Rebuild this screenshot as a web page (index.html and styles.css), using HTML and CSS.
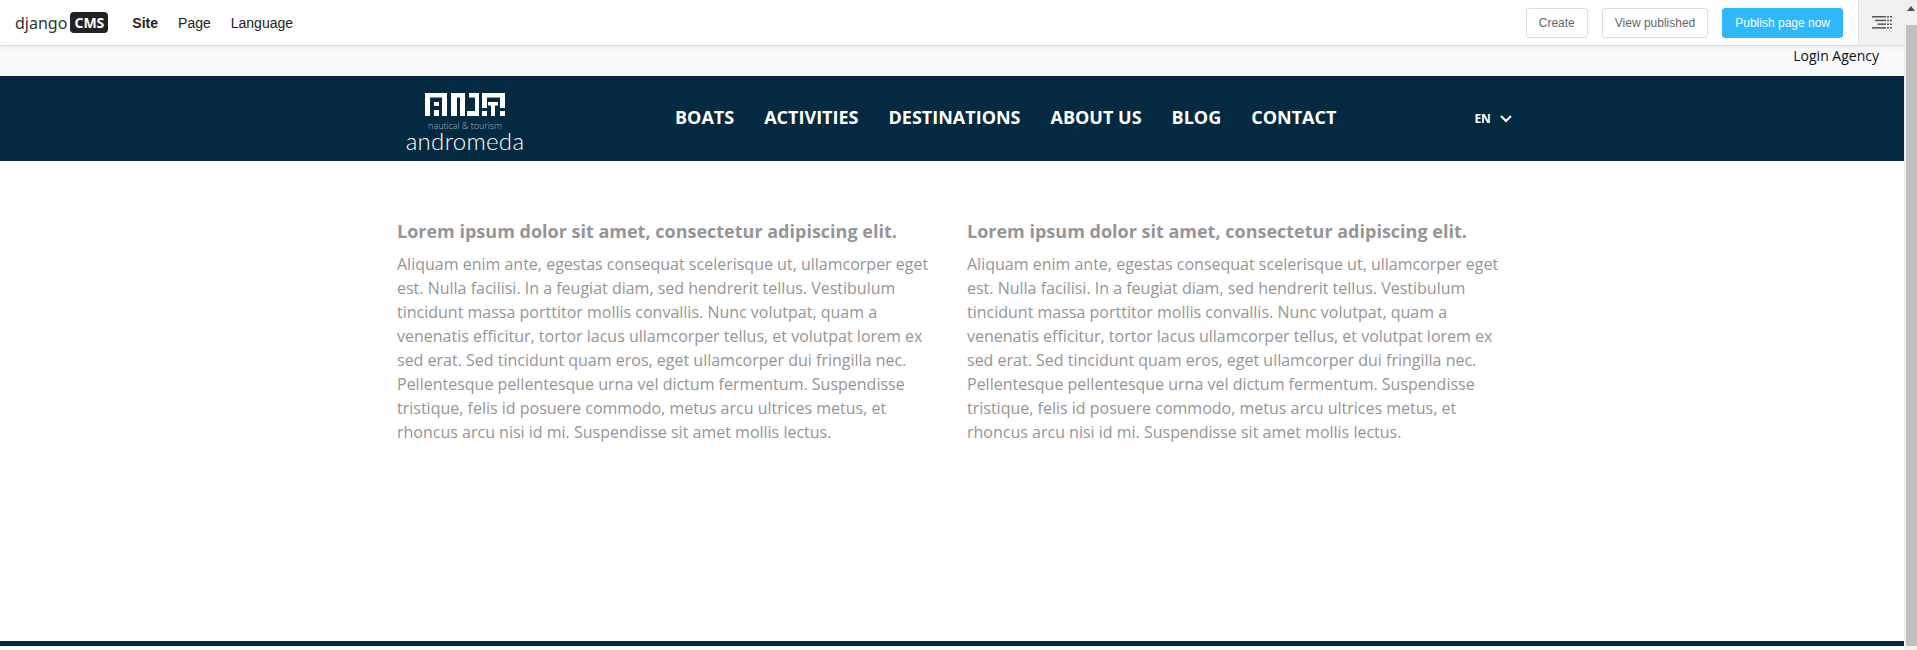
FILE: index.html
```html
<!DOCTYPE html>
<html lang="en">

<head>
  <meta charset="UTF-8" />
  <meta name="viewport" content="width=device-width, initial-scale=1.0" />
  <title>Andromeda - Nautical &amp; Tourism</title>
  <link rel="stylesheet" href="styles.css">
</head>

<body>
  <div class="page">
    <div class="cms-toolbar">
      <div class="cms-logo">django <span class="cms-badge">CMS</span></div>
      <nav class="cms-menu">
        <a href="#" class="active">Site</a>
        <a href="#">Page</a>
        <a href="#">Language</a>
      </nav>
      <div class="cms-actions">
        <a href="#" class="cms-btn">Create</a>
        <a href="#" class="cms-btn">View published</a>
        <a href="#" class="cms-btn primary">Publish page now</a>
      </div>
      <div class="cms-toggle">
        <svg width="20" height="13" viewBox="0 0 20 13" fill="#555">
          <rect x="0" y="0" width="14" height="1.5" />
          <rect x="3" y="3.7" width="11" height="1.5" />
          <rect x="5.5" y="7.4" width="8.5" height="1.5" />
          <rect x="0" y="11.1" width="14" height="1.5" />
          <path d="M15 0h2v1.5h-2zM18 0h2v1.5h-2zM15 3.7h2v1.5h-2zM18 3.7h2v1.5h-2zM15 7.4h2v1.5h-2zM18 7.4h2v1.5h-2zM15 11.1h2v1.5h-2zM18 11.1h2v1.5h-2z" />
        </svg>
      </div>
    </div>

    <div class="login-bar"><a href="#">Login Agency</a></div>

    <header class="site-header">
      <div class="container header-inner">
        <a href="#" class="logo">
          <svg width="80" height="23" viewBox="0 0 80 23" fill="#fff">
            <path d="M0 0h22v23h-5V4.500H5V23H0z" />
            <path d="M9 9h5v4H9zM9 17h5v6H9z" />
            <path d="M26 0h14v23h-5V4.500h-3V23h-6z" />
            <path d="M44 0h10v23H42v-5h8V4.500h-6z" />
            <path d="M57 0h23v15h-5V4.500H62V15h-5zM57 18h5v5h-5zM75 18h5v5h-5z" />
            <path d="M63 9h10v3.500h-3V23h-4V12.500h-3z" />
          </svg>
          <span class="logo-tag">nautical &amp; tourism</span>
          <span class="logo-name">andromeda</span>
        </a>
        <nav class="main-nav">
          <a href="#">BOATS</a>
          <a href="#">ACTIVITIES</a>
          <a href="#">DESTINATIONS</a>
          <a href="#">ABOUT US</a>
          <a href="#">BLOG</a>
          <a href="#">CONTACT</a>
        </nav>
        <div class="lang">EN
          <svg width="12" height="8" viewBox="0 0 12 8" fill="none" stroke="#fff" stroke-width="2">
            <path d="M1 1l5 5 5-5" />
          </svg>
        </div>
      </div>
    </header>

    <main class="container content">
      <section class="col">
        <h3>Lorem ipsum dolor sit amet, consectetur adipiscing elit.</h3>
        <p>Aliquam enim ante, egestas consequat scelerisque ut, ullamcorper eget est. Nulla facilisi. In a feugiat diam, sed hendrerit tellus. Vestibulum tincidunt massa porttitor mollis convallis. Nunc volutpat, quam a venenatis efficitur, tortor lacus ullamcorper tellus, et volutpat lorem ex sed erat. Sed tincidunt quam eros, eget ullamcorper dui fringilla nec. Pellentesque pellentesque urna vel dictum fermentum. Suspendisse tristique, felis id posuere commodo, metus arcu ultrices metus, et rhoncus arcu nisi id mi. Suspendisse sit amet mollis lectus.</p>
      </section>
      <section class="col">
        <h3>Lorem ipsum dolor sit amet, consectetur adipiscing elit.</h3>
        <p>Aliquam enim ante, egestas consequat scelerisque ut, ullamcorper eget est. Nulla facilisi. In a feugiat diam, sed hendrerit tellus. Vestibulum tincidunt massa porttitor mollis convallis. Nunc volutpat, quam a venenatis efficitur, tortor lacus ullamcorper tellus, et volutpat lorem ex sed erat. Sed tincidunt quam eros, eget ullamcorper dui fringilla nec. Pellentesque pellentesque urna vel dictum fermentum. Suspendisse tristique, felis id posuere commodo, metus arcu ultrices metus, et rhoncus arcu nisi id mi. Suspendisse sit amet mollis lectus.</p>
      </section>
    </main>

    <footer class="site-footer"></footer>
  </div>

  <div class="scrollbar">
    <div class="scroll-up"></div>
    <div class="scroll-thumb"></div>
  </div>
</body>

</html>
```

FILE: styles.css
```css
* {
  box-sizing: border-box;
}

html,
body {
  height: 100%;
  overflow: hidden;
}

body {
  display: flex;
  margin: 0;
  background: #fff;
  font-family: "Open Sans", sans-serif;
}

a {
  color: inherit;
  text-decoration: none;
}

.page {
  flex: 1;
  min-width: 0;
}

/* cms toolbar */
.cms-toolbar {
  display: flex;
  align-items: center;
  position: relative;
  z-index: 2;
  width: 1917px;
  height: 46px;
  padding-left: 15px;
  background: #fff;
  border-bottom: 1px solid #ddd;
  box-shadow: 0 0 5px rgba(0, 0, 0, 0.1);
  font-family: "Liberation Sans", Arial, sans-serif;
  color: #222;
}

.cms-logo {
  display: flex;
  align-items: center;
  gap: 3px;
  font-family: "Noto Sans", sans-serif;
  font-size: 16px;
  color: #333;
}

.cms-badge {
  width: 38px;
  height: 21px;
  border-radius: 4px;
  background: #222;
  color: #fff;
  font-size: 14px;
  font-weight: 700;
  line-height: 21px;
  text-align: center;
}

.cms-menu {
  display: flex;
  gap: 20px;
  margin-left: 24px;
  font-size: 14px;
}

.cms-menu .active {
  font-weight: 700;
}

.cms-actions {
  display: flex;
  gap: 14px;
  margin-left: auto;
  margin-right: 15px;
}

.cms-btn {
  height: 30px;
  padding: 0 12px;
  border: 1px solid #ddd;
  border-radius: 3px;
  color: #666;
  font-size: 12px;
  line-height: 28px;
}

.cms-btn.primary {
  border-color: #2eb8ff;
  background: #2eb8ff;
  color: #fff;
}

.cms-toggle {
  display: flex;
  align-items: center;
  justify-content: center;
  width: 59px;
  height: 45px;
  padding-right: 13px;
  background: #f1f1f1;
  border-left: 1px solid #ddd;
}

/* login row */
.login-bar {
  height: 30px;
  padding-right: 25px;
  background: #f8f9fa;
  color: #111;
  font-size: 14px;
  line-height: 20px;
  text-align: right;
}

/* site header */
.container {
  width: 1140px;
  margin: 0 auto;
  padding: 0 15px;
}

.site-header {
  height: 85px;
  background: #032a41;
  color: #fff;
}

.header-inner {
  display: flex;
  align-items: center;
  height: 100%;
}

.logo {
  display: flex;
  flex-direction: column;
  align-items: center;
  flex: none;
  width: 120px;
  margin-left: 8px;
  padding-top: 8px;
}

.logo-tag {
  margin-top: 5px;
  font-size: 9px;
  font-weight: 300;
  line-height: 10px;
  color: #a9b6bf;
}

.logo-name {
  margin-top: -1px;
  font-family: "Lato", sans-serif;
  font-size: 24px;
  font-weight: 300;
  line-height: 22px;
  letter-spacing: 0.3px;
}

.main-nav {
  display: flex;
  flex: none;
  gap: 30px;
  margin-left: 150px;
  padding-bottom: 3px;
  font-size: 18px;
  font-weight: 700;
}

.lang {
  display: flex;
  align-items: center;
  flex: none;
  gap: 9px;
  margin-left: 138px;
  font-size: 12px;
  font-weight: 700;
}

/* content */
.content {
  display: flex;
  gap: 30px;
  padding-top: 57px;
}

.col {
  width: 540px;
  color: #959595;
}

.col h3 {
  margin: 0 0 7px;
  font-size: 18px;
  line-height: 27px;
}

.col p {
  margin: 0;
  font-size: 16px;
  line-height: 24px;
}

/* footer strip */
.site-footer {
  height: 5px;
  margin-top: 197px;
  background: #032a41;
}

/* scrollbar */
.scrollbar {
  flex: none;
  width: 13px;
  position: relative;
  z-index: 3;
  background: #f1f1f1;
}

.scroll-up {
  width: 0;
  height: 0;
  margin: 6px 0 0 3px;
  border: 4px solid transparent;
  border-top: 0;
  border-bottom: 5px solid #505050;
}

.scroll-thumb {
  height: 621px;
  margin: 14px 0 0 2px;
  background: #c1c1c1;
}
```
